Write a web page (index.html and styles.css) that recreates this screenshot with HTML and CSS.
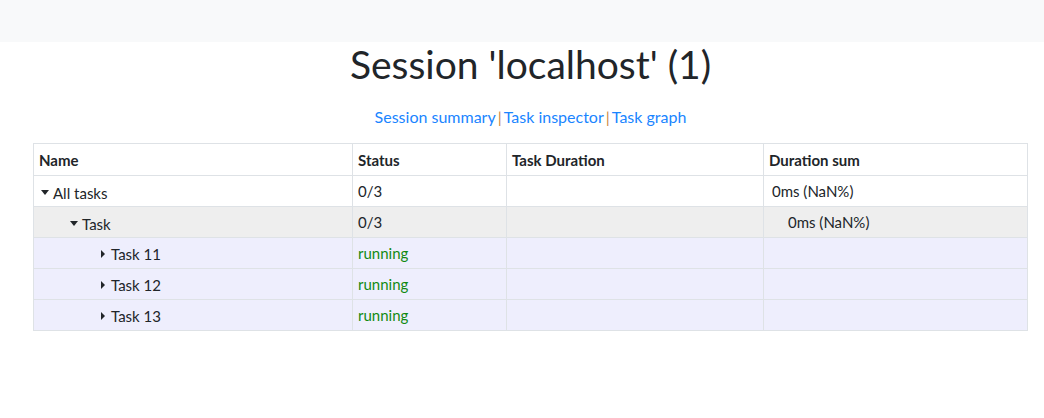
FILE: index.html
```html
<!DOCTYPE html>
<html>
<head>
<meta charset="utf-8">
<link rel="stylesheet" href="styles.css">
</head>
<body>
<div class="topbar"></div>
<main class="content">
  <h1 class="title">Session 'localhost' (1)</h1>
  <nav class="links">
    <a href="#">Session summary</a><span class="sep">|</span><a href="#">Task inspector</a><span class="sep">|</span><a href="#">Task graph</a>
  </nav>
  <table class="tasks">
    <colgroup>
      <col class="c-name"><col class="c-status"><col class="c-dur"><col class="c-sum">
    </colgroup>
    <thead>
      <tr><th>Name</th><th>Status</th><th>Task Duration</th><th>Duration sum</th></tr>
    </thead>
    <tbody>
      <tr class="lvl0">
        <td><span class="name l0"><span class="caret down"></span>All tasks</span></td>
        <td>0/3</td><td></td><td><span class="sum s0">0ms (NaN%)</span></td>
      </tr>
      <tr class="lvl1">
        <td><span class="name l1"><span class="caret down"></span>Task</span></td>
        <td>0/3</td><td></td><td><span class="sum s1">0ms (NaN%)</span></td>
      </tr>
      <tr class="lvl2">
        <td><span class="name l2"><span class="caret right"></span>Task 11</span></td>
        <td class="running">running</td><td></td><td></td>
      </tr>
      <tr class="lvl2">
        <td><span class="name l2"><span class="caret right"></span>Task 12</span></td>
        <td class="running">running</td><td></td><td></td>
      </tr>
      <tr class="lvl2">
        <td><span class="name l2"><span class="caret right"></span>Task 13</span></td>
        <td class="running">running</td><td></td><td></td>
      </tr>
    </tbody>
  </table>
</main>
</body>
</html>
```
FILE: styles.css
```css
html, body {
  margin: 0;
  padding: 0;
  background: #ffffff;
  font-family: "Lato", "Open Sans", sans-serif;
  color: #212529;
}

.topbar {
  height: 42px;
  background: #f8f9fa;
}

.content {
  padding: 0 16px 0 33px;
}

.title {
  margin: 0;
  font-size: 39px;
  font-weight: 400;
  line-height: 44px;
  text-align: center;
  color: #212529;
}

.links {
  margin-top: 20px;
  text-align: center;
  font-size: 16px;
  line-height: 22px;
}

.links a {
  color: #1a85ff;
  text-decoration: none;
}

.sep {
  color: #cc8844;
  margin: 0 2px;
}

.tasks {
  margin-top: 15px;
  width: 100%;
  border-collapse: collapse;
  font-size: 15px;
}

.c-name { width: 319px; }
.c-status { width: 154px; }
.c-dur { width: 257px; }

.tasks th,
.tasks td {
  border: 1px solid #dee2e6;
  padding: 0 5px;
  height: 30px;
  text-align: left;
  vertical-align: middle;
}

.tasks th {
  font-weight: 700;
  height: 30px;
  padding-top: 1px;
}

.lvl1 td { background: #eeeeee; }
.lvl2 td { background: #eeeefd; }

.name {
  display: inline-flex;
  align-items: center;
}

.l0 { padding-left: 2px; }
.l1 { padding-left: 31px; }
.l2 { padding-left: 62px; }

.caret {
  display: inline-block;
  width: 0;
  height: 0;
}

.caret.down {
  border-left: 4px solid transparent;
  border-right: 4px solid transparent;
  border-top: 5px solid #212529;
  margin-right: 4px;
}

.caret.right {
  border-top: 4px solid transparent;
  border-bottom: 4px solid transparent;
  border-left: 4px solid #212529;
  margin-right: 6px;
}

.sum { display: inline-block; }
.s0 { padding-left: 3px; }
.s1 { padding-left: 19px; }

.running { color: #118a11; }
```
